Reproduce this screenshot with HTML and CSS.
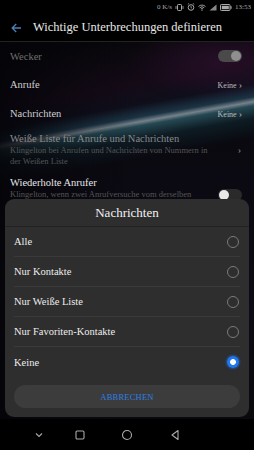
FILE: index.html
```html
<!DOCTYPE html>
<html lang="de">
<head>
<meta charset="utf-8">
<link rel="stylesheet" href="styles.css">
</head>
<body>
<div class="screen">
  <div class="statusbar">
    <span class="sb-text">0 K/s</span>
    <svg class="sb-icon" width="9" height="7" viewBox="0 0 9 7"><rect x="2.5" y="0.5" width="4" height="6" rx="0.8" fill="none" stroke="#aaa" stroke-width="1"/><path d="M1 2v3M8 2v3" stroke="#aaa" stroke-width="0.8"/></svg>
    <svg class="sb-icon" width="8" height="8" viewBox="0 0 8 8"><circle cx="4" cy="4.5" r="2.8" fill="none" stroke="#aaa" stroke-width="1"/><path d="M4 3v1.6l1 .6M0.8 1.4l1.4-1M7.2 1.4l-1.4-1" stroke="#aaa" stroke-width="0.8" fill="none"/></svg>
    <svg class="sb-icon" width="8" height="7" viewBox="0 0 8 7"><path d="M0.5 2.5a5 5 0 0 1 7 0M1.7 3.8a3.3 3.3 0 0 1 4.6 0M2.9 5a1.6 1.6 0 0 1 2.2 0" stroke="#aaa" stroke-width="0.9" fill="none"/><circle cx="4" cy="6.2" r="0.6" fill="#aaa"/></svg>
    <svg class="sb-icon" width="8" height="7" viewBox="0 0 8 7"><path d="M0.5 6.5L7.5 0.5V6.5Z" fill="#888"/></svg>
    <svg class="sb-icon" width="12" height="7" viewBox="0 0 12 7"><rect x="0.5" y="0.5" width="9.5" height="6" rx="0.8" fill="none" stroke="#aaa" stroke-width="1"/><rect x="1.8" y="1.8" width="7" height="3.4" fill="#aaa"/><rect x="10.4" y="2.2" width="1.2" height="2.6" fill="#aaa"/></svg>
    <span class="sb-text">13:53</span>
  </div>

  <div class="appbar">
    <svg class="back" width="11" height="10" viewBox="0 0 11 10"><path d="M10 5H1.5M5.2 1L1.2 5l4 4" stroke="#4f7fb4" stroke-width="1.3" fill="none"/></svg>
    <span class="appbar-title">Wichtige Unterbrechungen definieren</span>
  </div>

  <div class="list">
    <div class="row">
      <span class="row-label disabled">Wecker</span>
      <span class="toggle on-disabled"><span class="knob"></span></span>
    </div>
    <div class="row">
      <span class="row-label">Anrufe</span>
      <span class="row-value">Keine <span class="chev">›</span></span>
    </div>
    <div class="row">
      <span class="row-label">Nachrichten</span>
      <span class="row-value">Keine <span class="chev">›</span></span>
    </div>
    <div class="row-multi">
      <div class="multi-text">
        <div class="row-label dim">Weiße Liste für Anrufe und Nachrichten</div>
        <div class="row-sub">Klingelton bei Anrufen und Nachrichten von Nummern in der Weißen Liste</div>
      </div>
      <span class="chev dimchev">›</span>
    </div>
    <div class="row-multi">
      <div class="multi-text">
        <div class="row-label bright">Wiederholte Anrufer</div>
        <div class="row-sub">Klingelton, wenn zwei Anrufversuche vom derselben</div>
      </div>
      <span class="toggle off"><span class="knob"></span></span>
    </div>
  </div>

  <div class="navbar">
    <svg width="10" height="8" viewBox="0 0 10 8"><path d="M2 2.5l3 3 3-3" stroke="#aaa" stroke-width="1.1" fill="none"/></svg>
    <svg width="10" height="10" viewBox="0 0 10 10"><rect x="1" y="1" width="8" height="8" rx="1.2" fill="none" stroke="#aaa" stroke-width="1.1"/></svg>
    <svg width="12" height="12" viewBox="0 0 12 12"><circle cx="6" cy="6" r="4.5" fill="none" stroke="#aaa" stroke-width="1.1"/></svg>
    <svg width="10" height="12" viewBox="0 0 10 12"><path d="M8 1.5v9L2 6z" fill="none" stroke="#aaa" stroke-width="1.1" stroke-linejoin="round"/></svg>
  </div>

  <div class="dialog">
    <div class="dialog-title">Nachrichten</div>
    <div class="options">
      <div class="option"><span>Alle</span><span class="radio"></span></div>
      <div class="option"><span>Nur Kontakte</span><span class="radio"></span></div>
      <div class="option"><span>Nur Weiße Liste</span><span class="radio"></span></div>
      <div class="option"><span>Nur Favoriten-Kontakte</span><span class="radio"></span></div>
      <div class="option"><span>Keine</span><span class="radio checked"></span></div>
    </div>
    <div class="cancel">ABBRECHEN</div>
  </div>
</div>
</body>
</html>
```

FILE: styles.css
```css
* { box-sizing: border-box; }
html, body { margin: 0; padding: 0; background: #000; }
body { font-family: "Liberation Serif", "DejaVu Serif", serif; }

.screen {
  position: relative;
  width: 254px;
  height: 450px;
  overflow: hidden;
  display: flex;
  flex-direction: column;
  background:
    radial-gradient(ellipse 90px 40px at 220px 60px, rgba(60,20,60,0.45), rgba(0,0,0,0)),
    linear-gradient(to right, rgba(4,4,8,0.85) 0%, rgba(4,4,8,0.2) 35%, rgba(4,4,8,0) 55%),
    linear-gradient(-10deg,
      rgba(0,0,0,0) 63%,
      rgba(20,55,65,0.4) 67%,
      rgba(60,125,140,0.55) 69.6%,
      rgba(190,210,220,0.6) 70.4%,
      rgba(50,105,135,0.45) 71.4%,
      rgba(25,25,50,0.35) 74%,
      rgba(40,15,40,0.4) 78%,
      rgba(0,0,0,0) 88%),
    linear-gradient(to bottom, #060608 0%, #0b0a12 40%, #0d0c16 70%, #08080b 100%);
}

.statusbar {
  height: 14px;
  flex: none;
  display: flex;
  justify-content: flex-end;
  align-items: center;
  gap: 3px;
  padding: 0 3px 0 0;
  background: #000;
}
.sb-text { font-size: 7px; color: #aaa; }
.sb-icon { display: block; }

.appbar {
  height: 28px;
  flex: none;
  display: flex;
  align-items: center;
  padding: 0 0 0 11px;
  border-bottom: 1px solid #222;
  background: #000;
}
.back { margin-right: 11px; }
.appbar-title { font-size: 12.5px; color: #e8e8e8; white-space: nowrap; }

.list { flex: 1; padding: 0 12px 0 10px; overflow: hidden; }
.row {
  height: 28.5px;
  display: flex;
  align-items: center;
  justify-content: space-between;
}
.row-label { font-size: 10.5px; color: #cfcfcf; white-space: nowrap; }
.row-label.disabled { color: #6e6e6e; }
.row-label.dim { color: #8a8a8a; line-height: 13px; }
.row-label.bright { color: #e6e6e6; line-height: 13px; }
.row-value { font-size: 8px; color: #bdbdbd; }
.chev { font-size: 10px; color: #aaa; }
.dimchev { color: #888; margin-right: 1px; }

.row-multi {
  display: flex;
  align-items: center;
  justify-content: space-between;
  padding: 4px 0 5px;
}
.multi-text { width: 210px; }
.row-sub { font-size: 8.5px; line-height: 11px; color: #555; }

.toggle {
  position: relative;
  width: 24px;
  height: 12px;
  border-radius: 6px;
  flex: none;
}
.toggle.on-disabled { background: #4a4a4a; }
.toggle.on-disabled .knob {
  position: absolute; right: 1px; top: 1px;
  width: 10px; height: 10px; border-radius: 50%; background: #8f8f8f;
}
.toggle.off { background: #2a2a2a; align-self: flex-end; margin-bottom: -1px; }
.toggle.off .knob {
  position: absolute; left: 1px; top: 1px;
  width: 10px; height: 10px; border-radius: 50%; background: #e8e8e8;
}

.navbar {
  height: 31px;
  flex: none;
  background: #000;
  display: flex;
  align-items: center;
  padding: 0 0 0 34px;
}
.navbar svg:nth-child(1) { margin-right: 31px; }
.navbar svg:nth-child(2) { margin-right: 36px; }
.navbar svg:nth-child(3) { margin-right: 37px; }

.dialog {
  position: absolute;
  left: 5px;
  top: 199px;
  width: 244px;
  height: 218px;
  background: #2e2e2e;
  border-radius: 9px;
  display: flex;
  flex-direction: column;
}
.dialog-title {
  height: 28px;
  display: flex;
  align-items: center;
  justify-content: center;
  font-size: 13px;
  color: #f2f2f2;
  border-bottom: 1px solid #222;
}
.options { margin: 0 9px; }
.option {
  height: 30px;
  display: flex;
  align-items: center;
  justify-content: space-between;
  font-size: 10.5px;
  color: #ededed;
  border-bottom: 1px solid #3a3a3a;
}
.option:last-child { border-bottom: none; }
.radio {
  width: 12px; height: 12px; border-radius: 50%;
  border: 1px solid #7a7a7a;
  margin-right: 1px;
}
.radio.checked {
  border: none;
  background: radial-gradient(circle, #fff 0 2.6px, #1e78f0 3.2px);
  box-shadow: 0 0 2px 1px rgba(30,120,240,0.5);
}
.cancel {
  margin: 8px 9px 0;
  height: 23px;
  border-radius: 12px;
  background: #3c3c3c;
  display: flex;
  align-items: center;
  justify-content: center;
  font-size: 8.5px;
  color: #2d7fe2;
  letter-spacing: 0.2px;
}
```
